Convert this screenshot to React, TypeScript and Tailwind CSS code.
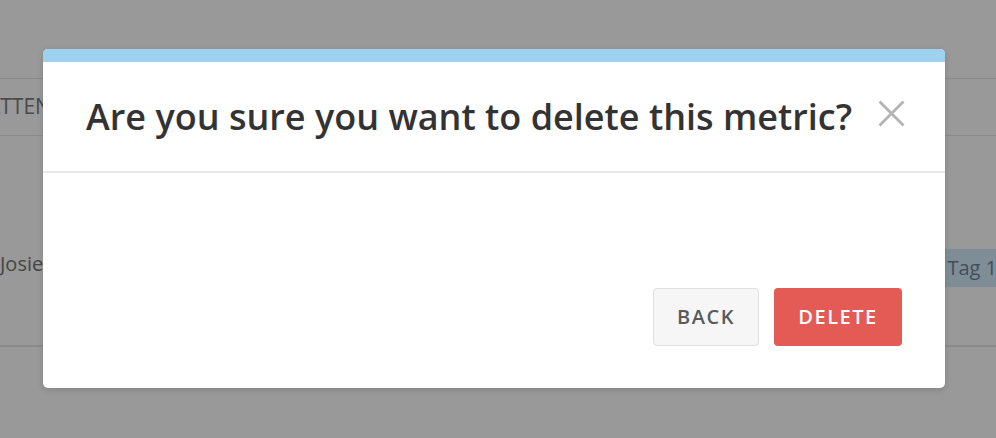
import React from "react";

const CloseIcon = () => (
  <svg width="27" height="27" viewBox="0 0 27 27" fill="none">
    <path d="M1.5 1.5L25.5 25.5M25.5 1.5L1.5 25.5" stroke="#b3b3b3" strokeWidth="2.8" />
  </svg>
);

const App = () => {
  return (
    <div className="relative w-full h-[438px] overflow-hidden bg-white font-['Open_Sans',sans-serif]">
      {/* page behind the modal */}
      <div className="pt-[78px]">
        <div className="flex items-center h-[58px] border-y border-[#e6e6e6]">
          <span className="ml-[-13px] text-[21px] text-[#7c7c7c]">ATTENDEES</span>
        </div>
        <div className="flex items-center justify-between h-[211px] border-b-2 border-[#e6e6e6] pt-[47px]">
          <span className="text-[20px] text-[#747474]">Josie</span>
          <span className="flex items-center h-[38px] mt-[8px] mr-[-13px] pl-[10px] pr-[12px] bg-[#d4ecfc] text-[20px] text-[#6d8396]">
            Tag 1
          </span>
        </div>
      </div>

      {/* modal */}
      <div className="absolute inset-0 bg-black/40 pt-[49px] pl-[43px]">
        <div className="w-[902px] h-[339px] flex flex-col bg-white rounded-[5px] overflow-hidden shadow-[0_2px_6px_rgba(0,0,0,0.15)]">
          <div className="h-[13px] bg-[#9dd1ee]"></div>
          <div className="flex items-center justify-between h-[111px] pl-[43px] pr-[40px] border-b-2 border-[#e8e8e8]">
            <h1 className="text-[36px] font-semibold text-[#333333] leading-none">
              Are you sure you want to delete this metric?
            </h1>
            <button className="mb-[6px]">
              <CloseIcon />
            </button>
          </div>
          <div className="flex-1 flex items-end justify-end gap-[15px] pb-[42px] pr-[43px]">
            <button className="w-[106px] h-[58px] rounded-[4px] border border-[#e0e0e0] bg-[#f6f6f6] text-[20px] font-semibold tracking-[1.5px] text-[#5a5a5a]">
              BACK
            </button>
            <button className="w-[128px] h-[58px] rounded-[4px] bg-[#e45a55] text-[20px] font-semibold tracking-[1.5px] text-white">
              DELETE
            </button>
          </div>
        </div>
      </div>
    </div>
  );
};

export default App;
